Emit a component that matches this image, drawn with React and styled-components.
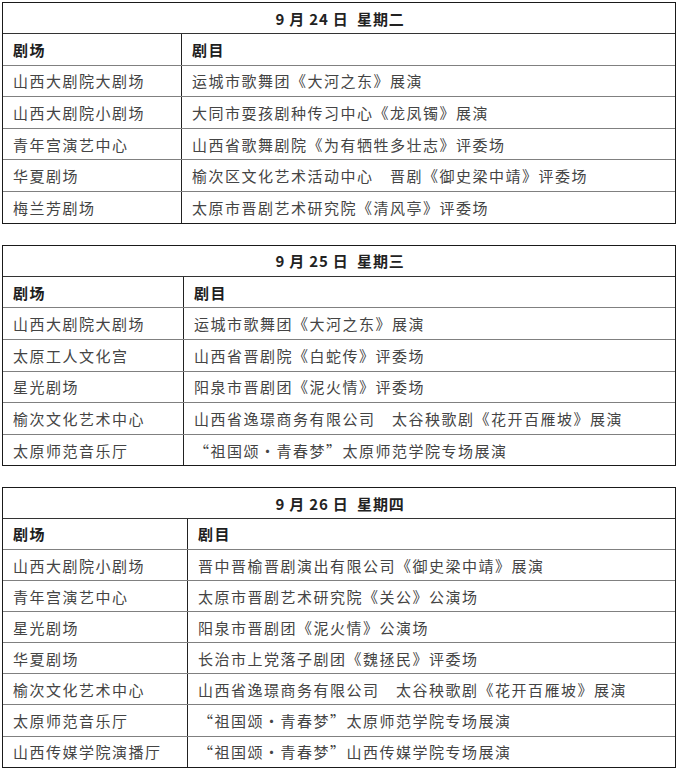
import React from "react";
import styled, { createGlobalStyle } from "styled-components";

const Global = createGlobalStyle`
  html, body { margin: 0; padding: 0; background: #fff; }
  body { font-family: "Noto Sans CJK SC", "Noto Sans", sans-serif; }
`;

const Page = styled.div`
  display: flex;
  flex-direction: column;
  gap: 21px;
  padding: 2px 4px 0 2px;
  width: 674px;
`;

const Table = styled.div`
  border: 1.5px solid #1a1a1a;
  display: flex;
  flex-direction: column;
`;

const TitleRow = styled.div`
  height: ${(p) => p.$h}px;
  display: flex;
  align-items: center;
  justify-content: center;
  padding-left: 2px;
  font-size: 15px;
  font-weight: 700;
  color: #222;
  letter-spacing: 0.8px;
  white-space: pre;
`;

const Row = styled.div`
  height: ${(p) => p.$h}px;
  display: grid;
  grid-template-columns: ${(p) => p.$col}px 1fr;
  border-top: 1.5px solid ${(p) => (p.$strong ? "#333" : "#808080")};
  box-sizing: border-box;
`;

const Cell = styled.div`
  display: flex;
  align-items: center;
  padding-left: 10px;
  font-size: 15px;
  letter-spacing: 1.5px;
  white-space: pre;
  color: ${(p) => (p.$head ? "#1e1e1e" : "#444")};
  font-weight: ${(p) => (p.$head ? 700 : 400)};
  & + & {
    border-left: 1px solid #222;
  }
`;

const data = [
  {
    title: "9 月 24 日  星期二",
    col: 178,
    h: 31.6,
    rows: [
      ["山西大剧院大剧场", "运城市歌舞团《大河之东》展演"],
      ["山西大剧院小剧场", "大同市耍孩剧种传习中心《龙凤镯》展演"],
      ["青年宫演艺中心", "山西省歌舞剧院《为有牺牲多壮志》评委场"],
      ["华夏剧场", "榆次区文化艺术活动中心　晋剧《御史梁中靖》评委场"],
      ["梅兰芳剧场", "太原市晋剧艺术研究院《清风亭》评委场"],
    ],
  },
  {
    title: "9 月 25 日  星期三",
    col: 180,
    h: 31.6,
    rows: [
      ["山西大剧院大剧场", "运城市歌舞团《大河之东》展演"],
      ["太原工人文化宫", "山西省晋剧院《白蛇传》评委场"],
      ["星光剧场", "阳泉市晋剧团《泥火情》评委场"],
      ["榆次文化艺术中心", "山西省逸璟商务有限公司　太谷秧歌剧《花开百雁坡》展演"],
      ["太原师范音乐厅", "“祖国颂·青春梦”太原师范学院专场展演"],
    ],
  },
  {
    title: "9 月 26 日  星期四",
    col: 184,
    h: 31.1,
    rows: [
      ["山西大剧院小剧场", "晋中晋榆晋剧演出有限公司《御史梁中靖》展演"],
      ["青年宫演艺中心", "太原市晋剧艺术研究院《关公》公演场"],
      ["星光剧场", "阳泉市晋剧团《泥火情》公演场"],
      ["华夏剧场", "长治市上党落子剧团《魏拯民》评委场"],
      ["榆次文化艺术中心", "山西省逸璟商务有限公司　太谷秧歌剧《花开百雁坡》展演"],
      ["太原师范音乐厅", "“祖国颂·青春梦”太原师范学院专场展演"],
      ["山西传媒学院演播厅", "“祖国颂·青春梦”山西传媒学院专场展演"],
    ],
  },
];

export default function App() {
  return (
    <>
      <Global />
      <Page>
        {data.map((t) => (
          <Table key={t.title}>
            <TitleRow $h={t.h - 1.5}>{t.title}</TitleRow>
            <Row $h={t.h} $col={t.col} $strong>
              <Cell $head>剧场</Cell>
              <Cell $head>剧目</Cell>
            </Row>
            {t.rows.map((r, i) => (
              <Row key={i} $h={t.h} $col={t.col}>
                <Cell>{r[0]}</Cell>
                <Cell>{r[1]}</Cell>
              </Row>
            ))}
          </Table>
        ))}
      </Page>
    </>
  );
}
